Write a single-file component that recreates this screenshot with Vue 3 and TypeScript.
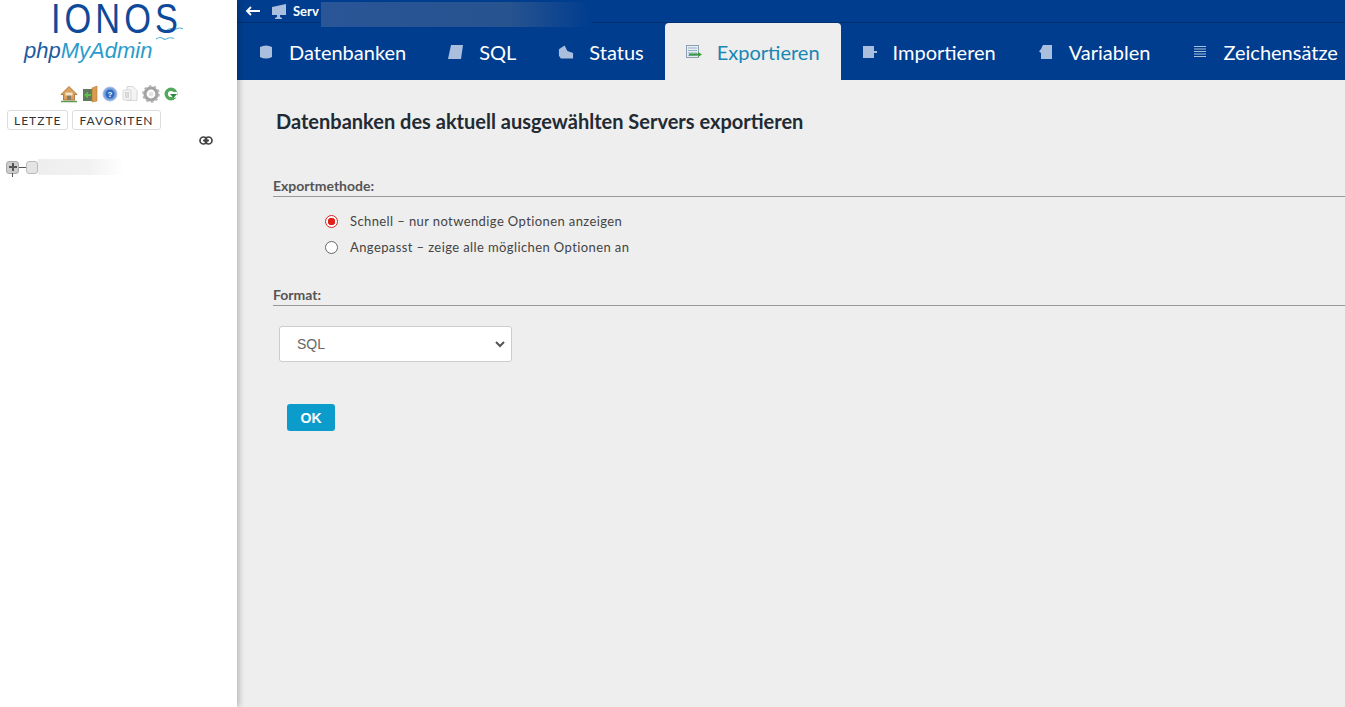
<script setup lang="ts">
const TABS = [
  { id: 'db', label: 'Datenbanken' },
  { id: 'sql', label: 'SQL' },
  { id: 'status', label: 'Status' },
  { id: 'export', label: 'Exportieren', active: true },
  { id: 'import', label: 'Importieren' },
  { id: 'vars', label: 'Variablen' },
  { id: 'charset', label: 'Zeichensätze' },
]
</script>

<template>
  <div class="page">
    <aside class="nav">
      <div class="logo">
        <div class="logo__ionos">IONOS</div>
        <div class="logo__pma">
          <span class="logo__php">php</span><span class="logo__my">MyAdmin</span>
          <svg class="logo__birds" viewBox="0 0 34 20" width="34" height="20" fill="none" stroke="#5bb4d8" stroke-width="1.1">
            <path d="M12 5c3-2 5-2 7 0 3-2 6-3 9-1" />
            <path d="M1 14c3-2 5-2 7-.5 1 1 2 1 3 .5 2-1 5-2 8-.5" />
          </svg>
        </div>
      </div>

      <div class="quick">
        <svg viewBox="0 0 18 18" width="18" height="18">
          <path d="M9 1.5 1 9.5h2.5V15h11V9.5H17z" fill="#d9a25f" stroke="#a8662a" stroke-width=".8" />
          <rect x="7" y="10" width="4" height="5" fill="#8c7a66" />
          <rect x="5.5" y="7.5" width="7" height="3" fill="#f3e3c8" />
          <path d="M1 16.5h16" stroke="#5b9a4a" stroke-width="1.5" />
        </svg>
        <svg viewBox="0 0 16 18" width="16" height="18">
          <rect x="1" y="4" width="10" height="12" fill="#5f7a5a" />
          <path d="M10 3l5-2v15l-5 1z" fill="#d99b52" stroke="#b87a33" stroke-width=".6" />
          <path d="M2 10l4-3.5V9h3v2H6v2.500z" fill="#5cbf4a" />
        </svg>
        <svg viewBox="0 0 16 16" width="16" height="16">
          <circle cx="8" cy="8" r="7" fill="#7aa3dc" stroke="#a9c3e6" />
          <circle cx="8" cy="8" r="4.500" fill="#2f6cc0" />
          <text x="8" y="10.800" text-anchor="middle" class="quick__q">?</text>
        </svg>
        <svg viewBox="0 0 16 18" width="16" height="18" fill="#f4f4f4" stroke="#d2d2d2" stroke-width=".9">
          <path d="M5 1.500h6l4 4v10H5z" />
          <rect x="1" y="5" width="8" height="10" rx="1" />
          <rect x="3.500" y="7.500" width="3" height="5" fill="#ddd" />
        </svg>
        <svg viewBox="0 0 18 18" width="18" height="18">
          <circle cx="9" cy="9" r="6" fill="none" stroke="#a3a3a3" stroke-width="3.200" />
          <circle cx="9" cy="9" r="7.800" fill="none" stroke="#b4b4b4" stroke-width="2" stroke-dasharray="2.500 2.400" />
          <circle cx="9" cy="9" r="2.500" fill="#e4e4e4" />
        </svg>
        <svg viewBox="0 0 14 16" width="14" height="16">
          <circle cx="7" cy="8" r="4.800" fill="none" stroke="#52a85a" stroke-width="3.400" />
          <path d="M7 6l6 0 0 5-3 1z" fill="#fff" />
          <path d="M6 8h7l-3.500 4z" fill="#2f8a3f" />
        </svg>
      </div>

      <div class="nav__btns">
        <button class="nav__btn">LETZTE</button>
        <button class="nav__btn">FAVORITEN</button>
      </div>

      <div class="nav__link">
        <svg viewBox="0 0 14 9" width="14" height="9" fill="none" stroke="#444" stroke-width="1.700">
          <rect x="1" y="1" width="7" height="7" rx="3.500" />
          <rect x="6" y="1" width="7" height="7" rx="3.500" />
          <path d="M4 4.500h6" />
        </svg>
      </div>

      <div class="tree">
        <span class="tree__plus">
          <svg viewBox="0 0 10 10" width="10" height="10"><path d="M5 1v8M1 5h8" stroke="#555" stroke-width="2" /></svg>
        </span>
        <span class="tree__dash"></span>
        <span class="tree__db"></span>
        <span class="tree__blur"></span>
        <span class="tree__tick"></span>
      </div>
    </aside>

    <div class="main">
      <header class="top">
        <div class="crumb">
          <svg viewBox="0 0 15 10" width="15" height="10" fill="none" stroke="#fff" stroke-width="1.800">
            <path d="M15 5H2M6 1 2 5l4 4" />
          </svg>
          <svg class="crumb__server" viewBox="0 0 16 15" width="16" height="15">
            <path d="M2 3 16 0v11H10v2l2 1v1H5v-1l2-1v-2H2z" fill="#a9bfdd" />
          </svg>
          <span class="crumb__text">Serv</span>
        </div>
        <div class="top__blur"></div>
        <nav class="tabs">
          <a v-for="t in TABS" :key="t.id" class="tab" :class="{ 'tab--active': t.active }">
            <span class="tab__icon">
              <svg v-if="t.id === 'db'" viewBox="0 0 14 16" width="14" height="16">
                <path d="M1 3q6-3 12 0v10q-6 3-12 0z" fill="#a9bfdd" />
              </svg>
              <svg v-else-if="t.id === 'sql'" viewBox="0 0 16 16" width="16" height="16">
                <path d="M3 1h12l-2 14H0z" fill="#a9bfdd" />
              </svg>
              <svg v-else-if="t.id === 'status'" viewBox="0 0 17 16" width="17" height="16">
                <path d="M1 5 7 1l3 6 6 2v6H3L1 12z" fill="#a9bfdd" />
              </svg>
              <svg v-else-if="t.id === 'export'" viewBox="0 0 16 14" width="16" height="14">
                <rect x=".5" y=".5" width="12" height="12" fill="#e8ecef" stroke="#8ea0b2" />
                <path d="M2 3h9M2 5.500h9M2 8h9M2 10.500h9" stroke="#8fb4cf" />
                <path d="M3 9.500h10" stroke="#3f9a3f" stroke-width="2" />
                <path d="m12 7 4 2.500-4 2.500z" fill="#3f9a3f" />
              </svg>
              <svg v-else-if="t.id === 'import'" viewBox="0 0 16 16" width="16" height="16">
                <path d="M1 2h11v5h3v2h-3v5H1z" fill="#a9bfdd" />
              </svg>
              <svg v-else-if="t.id === 'vars'" viewBox="0 0 16 16" width="16" height="16">
                <path d="M5 1h9v14H3V9L1 7.500 3 5z" fill="#a9bfdd" />
              </svg>
              <svg v-else viewBox="0 0 14 14" width="14" height="14">
                <path d="M1 1.500h12M1 4h12M1 6.500h12M1 9h12M1 11.500h12" stroke="#a9bfdd" />
              </svg>
            </span>
            {{ t.label }}
          </a>
        </nav>
      </header>

      <main class="content">
        <h2 class="title">Datenbanken des aktuell ausgewählten Servers exportieren</h2>

        <h3 class="section">Exportmethode:</h3>
        <ul class="options">
          <li class="option">
            <span class="radio radio--on"></span>
            Schnell – nur notwendige Optionen anzeigen
          </li>
          <li class="option">
            <span class="radio"></span>
            Angepasst – zeige alle möglichen Optionen an
          </li>
        </ul>

        <h3 class="section section--format">Format:</h3>
        <div class="select">
          SQL
          <svg viewBox="0 0 10 7" width="10" height="7" fill="none" stroke="#555" stroke-width="2">
            <path d="m1 1 4 4 4-4" />
          </svg>
        </div>

        <button class="ok">OK</button>
      </main>
    </div>
  </div>
</template>

<style>
html, body {
  margin: 0;
  height: 100%;
  overflow: hidden;
}
</style>

<style scoped>
.page {
  display: flex;
  width: 1345px;
  height: 707px;
  overflow: hidden;
  background: #eee;
  font-family: "Lato", "Liberation Sans", sans-serif;
}

.nav {
  position: relative;
  z-index: 2;
  flex: 0 0 237px;
  background: #fff;
  box-shadow: 2px 0 6px rgba(0, 0, 0, 0.25);
}

.logo {
  height: 70px;
  overflow: hidden;
}
.logo__ionos {
  margin: -3px 0 0 51px;
  height: 42px;
  font-family: "Liberation Sans", sans-serif;
  font-size: 43px;
  line-height: 42px;
  letter-spacing: 5px;
  color: #0f4a9a;
  transform: scaleX(0.8);
  transform-origin: left;
}
.logo__pma {
  display: flex;
  margin-left: 24px;
  margin-top: -1px;
  font-family: "Liberation Sans", sans-serif;
  font-style: italic;
  font-size: 22px;
  line-height: 26px;
}
.logo__php { color: #1d5a9e; }
.logo__my { color: #2a9cc9; }
.logo__birds { margin: -13px 0 0 3px; }

.quick {
  display: flex;
  justify-content: flex-start;
  align-items: center;
  gap: 4px;
  margin: 15px 0 0 60px;
  height: 18px;
}
.quick__q {
  font-family: "Liberation Sans", sans-serif;
  font-size: 8px;
  font-weight: 700;
  fill: #fff;
}

.nav__btns {
  display: flex;
  gap: 4px;
  margin: 7px 0 0 7px;
}
.nav__btn {
  height: 20px;
  padding: 0 6px;
  border: 1px solid #ddd;
  border-radius: 3px;
  background: #fff;
  font: inherit;
  font-size: 12px;
  letter-spacing: 1px;
  color: #333;
}

.nav__link {
  display: flex;
  justify-content: flex-end;
  padding-right: 24px;
  margin-top: 6px;
  height: 10px;
}

.tree {
  position: relative;
  display: flex;
  align-items: center;
  margin: 13px 0 0 6px;
  height: 16px;
}
.tree__plus {
  display: flex;
  align-items: center;
  justify-content: center;
  width: 13px;
  height: 13px;
  border: 1px solid #aaa;
  border-radius: 3px;
  background: #ccc;
  box-sizing: border-box;
}
.tree__dash {
  width: 7px;
  border-top: 1px solid #555;
}
.tree__db {
  width: 12px;
  height: 13px;
  border: 1px solid #bbb;
  border-radius: 3px;
  background: #e4e4e4;
  box-sizing: border-box;
}
.tree__blur {
  width: 86px;
  height: 16px;
  background: linear-gradient(90deg, #eee, #f2f2f2 60%, #fff);
}
.tree__tick {
  position: absolute;
  left: 6px;
  top: 14px;
  height: 4px;
  border-left: 1px solid #555;
}

.main {
  position: relative;
  flex: 1;
  min-width: 0;
}

.top {
  position: relative;
  height: 80px;
  background: #003d8f;
}
.top__blur {
  position: absolute;
  left: 84px;
  top: 2px;
  width: 270px;
  height: 25px;
  background: linear-gradient(90deg, #2a5597, #27538f 70%, #003d8f);
}
.crumb {
  display: flex;
  align-items: center;
  height: 22px;
  padding-left: 8px;
  border-bottom: 1px solid #00306f;
  color: #fff;
  font-size: 13px;
  font-weight: 700;
}
.crumb__server { margin-left: 10px; }
.crumb__text { margin-left: 7px; }

.tabs {
  position: relative;
  display: flex;
  height: 57px;
}
.tab {
  display: flex;
  flex: none;
  align-items: center;
  gap: 15px;
  padding: 0 21px;
  white-space: nowrap;
  font-size: 20px;
  color: #fff;
}
.tab__icon {
  display: flex;
  justify-content: center;
  width: 16px;
}
.tab--active {
  background: #eee;
  color: #1787b4;
  border-radius: 4px 4px 0 0;
}

.content {
  padding: 0 0 0 36px;
}
.title {
  margin: 29px 0 0 3px;
  font-size: 20px;
  line-height: 24px;
  font-weight: 700;
  color: #222a33;
}
.section {
  margin: 44px 0 0;
  padding-bottom: 2px;
  border-bottom: 1px solid #999;
  font-size: 14px;
  line-height: 17px;
  font-weight: 700;
  color: #555;
}
.section--format {
  margin-top: 26px;
}
.options {
  margin: 11px 0 0;
  padding: 0 0 0 52px;
  list-style: none;
}
.option {
  display: flex;
  align-items: center;
  gap: 12px;
  height: 26px;
  font-size: 13px;
  letter-spacing: 0.4px;
  color: #444;
}
.radio {
  box-sizing: border-box;
  width: 13px;
  height: 13px;
  border: 1px solid #666;
  border-radius: 50%;
  background: #fff;
}
.radio--on {
  border: 1.500px solid #d22;
  background: radial-gradient(circle, #e0201a 3.500px, #fff 4px);
}

.select {
  display: flex;
  align-items: center;
  justify-content: space-between;
  box-sizing: border-box;
  width: 233px;
  height: 36px;
  margin: 20px 0 0 6px;
  padding: 0 6px 0 17px;
  border: 1px solid #ccc;
  border-radius: 3px;
  background: #fff;
  font-family: "Liberation Sans", sans-serif;
  font-size: 14px;
  color: #666;
}

.ok {
  display: block;
  width: 48px;
  height: 27px;
  margin: 42px 0 0 14px;
  padding: 0;
  border: 0;
  border-radius: 3px;
  background: #0c9ccb;
  color: #fff;
  font-family: "Liberation Sans", sans-serif;
  font-size: 14px;
  font-weight: 700;
}
</style>
